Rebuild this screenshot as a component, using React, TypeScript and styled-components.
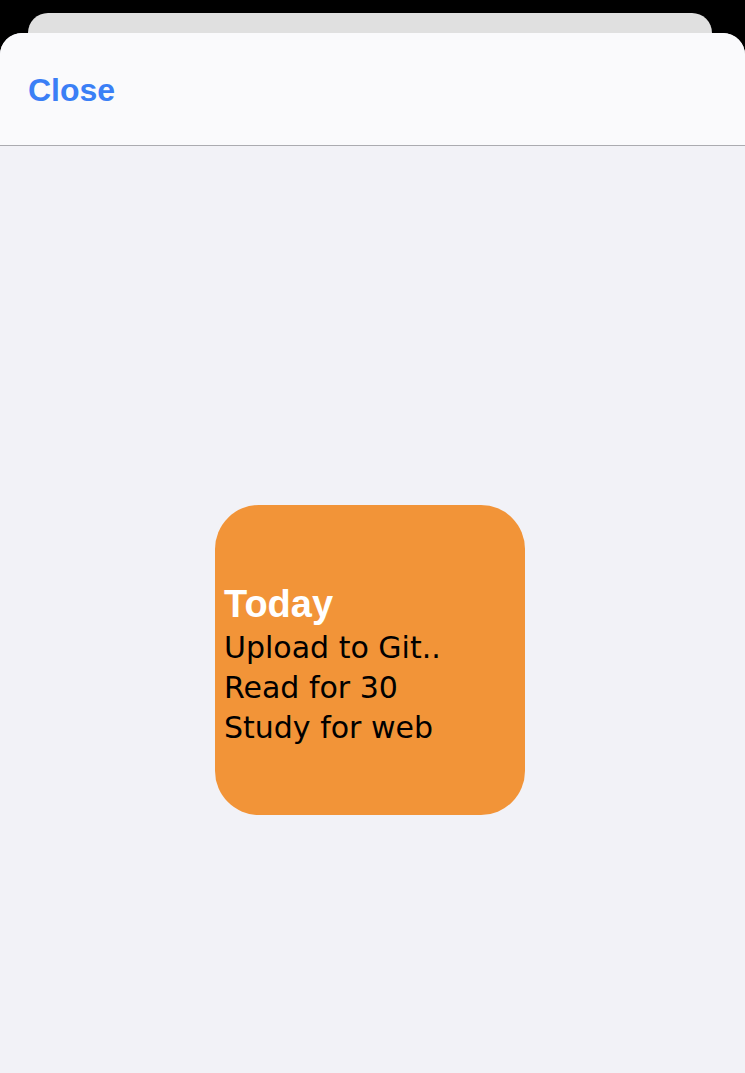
import React from "react";
import styled, { createGlobalStyle } from "styled-components";

const GlobalStyle = createGlobalStyle`
  html, body {
    margin: 0;
    padding: 0;
    background: #000;
  }
  * {
    box-sizing: border-box;
  }
`

const Screen = styled.div`
  width: 745px;
  height: 1073px;
  background: #000;
  padding-top: 13px;
  display: flex;
  flex-direction: column;
  overflow: hidden;
`

const BehindCard = styled.div`
  height: 20px;
  margin: 0 33px 0 28px;
  background: #e0e0e0;
  border-radius: 20px 20px 0 0;
`

const Sheet = styled.div`
  flex: 1;
  display: flex;
  flex-direction: column;
  background: #f2f2f7;
  border-radius: 22px 22px 0 0;
  overflow: hidden;
`

const Header = styled.div`
  height: 113px;
  display: flex;
  align-items: center;
  padding: 2px 0 0 28px;
  background: #fafafc;
  border-bottom: 1px solid #ababb0;
`

const CloseButton = styled.button`
  background: transparent;
  border: 0;
  padding: 0;
  font-family: "Liberation Sans", Arial, sans-serif;
  font-weight: 700;
  font-size: 32px;
  color: #3a7ff6;
  cursor: pointer;
`

const Body = styled.div`
  flex: 1;
  padding: 359px 0 0 215px;
`

const Widget = styled.div<{ $color: string }>`
  width: 310px;
  height: 310px;
  border-radius: 44px;
  background: ${({ $color }) => $color};
  padding: 75px 0 0 9px;
  display: flex;
  flex-direction: column;
`

const WidgetTitle = styled.div`
  font-family: "Liberation Sans", Arial, sans-serif;
  font-weight: 700;
  font-size: 38px;
  line-height: 48px;
  color: #fff;
`

const Task = styled.div`
  font-family: "DejaVu Sans", sans-serif;
  font-size: 30px;
  line-height: 40px;
  color: #000;
  white-space: nowrap;
`

const tasks = ["Upload to Git..", "Read for 30", "Study for web"];

const App = () => {
  return (
    <Screen>
      <GlobalStyle />
      <BehindCard />
      <Sheet>
        <Header>
          <CloseButton>Close</CloseButton>
        </Header>
        <Body>
          <Widget $color="#f29438">
            <WidgetTitle>Today</WidgetTitle>
            {tasks.map((task) => (
              <Task key={task}>{task}</Task>
            ))}
          </Widget>
        </Body>
      </Sheet>
    </Screen>
  );
}

export default App
